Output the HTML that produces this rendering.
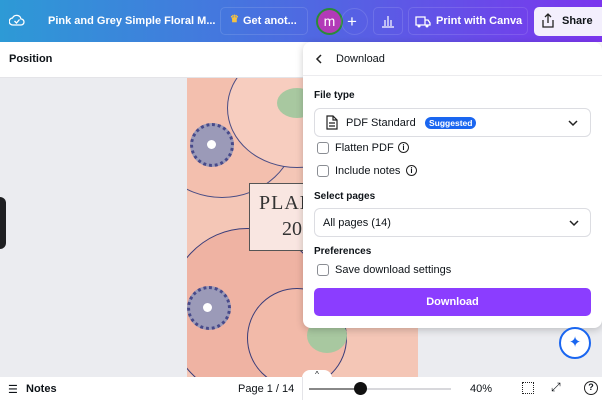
<!DOCTYPE html><html><head><style>
*{margin:0;padding:0;box-sizing:border-box}
body{width:602px;height:400px;overflow:hidden;position:relative;background:#ebecf0;font-family:"Liberation Sans",sans-serif;font-size:11px;color:#0e1318}
.hdr{position:absolute;left:0;top:0;width:602px;height:42px;background:linear-gradient(90deg,#2d9ad6 0%,#4a6fe0 45%,#7b35ee 100%);color:#fff;font-weight:bold}
.a{position:absolute}
.btn{position:absolute;top:7px;height:28px;border:1px solid rgba(255,255,255,.12);border-radius:5px}
.tb{position:absolute;left:0;top:42px;width:602px;height:36px;background:#fff;border-bottom:1px solid #e4e4e8}
.page{position:absolute;left:187px;top:78px;width:231px;height:302px;background:#f4c6b6;overflow:hidden}
.panel{position:absolute;left:303px;top:42px;width:299px;height:286px;background:#fff;border-radius:8px;box-shadow:0 2px 8px rgba(0,0,0,.2)}
.sel{position:absolute;left:11px;width:277px;height:29px;border:1px solid #dcdde2;border-radius:6px}
.cb{position:absolute;left:14px;width:12px;height:12px;border:1.5px solid #8a8d93;border-radius:3px}
.lbl{position:absolute;font-weight:bold;font-size:10px}
.bot{position:absolute;left:0;top:377px;width:602px;height:23px;background:#fff}
</style></head><body>
<div class="hdr">
<svg class="a" style="left:9px;top:13px" width="16" height="14" viewBox="0 0 16 14"><path d="M4 12h8a3 3 0 0 0 0-6 4.5 4.5 0 0 0-8.5-1A3.5 3.5 0 0 0 4 12z" fill="none" stroke="#fff" stroke-width="1.3"/><path d="M5.5 8l2 2 3-3.5" fill="none" stroke="#fff" stroke-width="1.3"/></svg>
<div class="a" style="left:48px;top:15px;font-size:11px">Pink and Grey Simple Floral M...</div>
<div class="btn" style="left:220px;width:88px"><span class="a" style="left:9px;top:6px;color:#f5c242;font-size:10px">♛</span><span class="a" style="left:22px;top:7px">Get anot...</span></div>
<div class="a" style="left:316px;top:8px;width:27px;height:27px;border-radius:50%;background:#b23ab8;border:2px solid #2a8a3a;text-align:center;line-height:22px;font-size:14px;font-weight:normal">m</div>
<div class="a" style="left:341px;top:8px;width:27px;height:27px;border-radius:50%;border:1px solid rgba(255,255,255,.12)"></div>
<div class="a" style="left:347px;top:12px;font-size:17px;font-weight:normal">+</div>
<div class="btn" style="left:373px;width:30px"><svg class="a" style="left:7px;top:6px" width="14" height="14"><path d="M1 13h12M4 12V6M7 12V2M10 12V6" stroke="#fff" stroke-width="1.2"/></svg></div>
<div class="btn" style="left:408px;width:120px"><svg class="a" style="left:6px;top:7px" width="16" height="13"><path d="M1 2h9v8H1zM10 5h3l2 3v2h-5" fill="none" stroke="#fff" stroke-width="1.3"/><circle cx="4" cy="11" r="1.5" fill="#fff"/><circle cx="12" cy="11" r="1.5" fill="#fff"/></svg><span class="a" style="left:27px;top:7px">Print with Canva</span></div>
<div class="a" style="left:534px;top:7px;width:68px;height:29px;background:#f3effd;border-radius:5px 0 0 5px;color:#0e1318"><svg class="a" style="left:7px;top:6px" width="14" height="15"><path d="M2 7v7h10V7M7 10V1M4 4l3-3 3 3" fill="none" stroke="#222" stroke-width="1.3"/></svg><span class="a" style="left:28px;top:8px">Share</span></div>
</div>
<div class="tb"><div class="a" style="left:9px;top:11px;font-weight:bold;font-size:11px">Position</div></div>
<div class="a" style="left:0;top:197px;width:6px;height:52px;background:#1e1f22;border-radius:0 6px 6px 0"></div>
<div class="page">
<div class="a" style="left:-40px;top:-20px;width:150px;height:140px;border-radius:50%;background:#f3bfae;border:1.5px solid #4a4d85"></div>
<div class="a" style="left:40px;top:-30px;width:140px;height:120px;border-radius:50%;background:#f7cdbf;border:1.5px solid #4a4d85"></div>
<div class="a" style="left:-20px;top:150px;width:160px;height:170px;border-radius:50%;background:#efb3a3;border:1.5px solid #3a3d7a"></div>
<div class="a" style="left:60px;top:210px;width:100px;height:100px;border-radius:50%;background:#f2baa9;border:1.5px solid #3a3d7a"></div>
<div class="a" style="left:90px;top:10px;width:40px;height:30px;border-radius:50%;background:#a8c8a0"></div>
<div class="a" style="left:120px;top:240px;width:40px;height:35px;border-radius:50%;background:#a8c8a0"></div>
<div class="a" style="left:3px;top:45px;width:44px;height:44px;border-radius:50%;background:#9b9ab8;border:3px dotted #474a8a"></div>
<div class="a" style="left:20px;top:62px;width:9px;height:9px;border-radius:50%;background:#fff"></div>
<div class="a" style="left:0;top:208px;width:44px;height:44px;border-radius:50%;background:#9b9ab8;border:3px dotted #474a8a"></div>
<div class="a" style="left:16px;top:225px;width:9px;height:9px;border-radius:50%;background:#fff"></div>
<div class="a" style="left:62px;top:105px;width:60px;height:68px;background:#f9e6e1;border:1px solid #555"></div>
<div class="a" style="left:72px;top:114px;font-family:'Liberation Serif',serif;font-size:20px;color:#333;letter-spacing:1px">PLAN</div>
<div class="a" style="left:95px;top:140px;font-family:'Liberation Serif',serif;font-size:20px;color:#333">20</div>
</div>
<div class="panel">
<svg class="a" style="left:12px;top:11px" width="8" height="12"><path d="M6 2L2 6l4 4" fill="none" stroke="#222" stroke-width="1.5"/></svg>
<div class="a" style="left:33px;top:11px;font-size:11px">Download</div>
<div class="a" style="left:0;top:33px;width:299px;height:1px;background:#ececef"></div>
<div class="lbl" style="left:11px;top:48px">File type</div>
<div class="sel" style="top:66px"><svg class="a" style="left:11px;top:6px" width="12" height="15"><path d="M1 1h6l4 4v9H1z M7 1v4h4 M3 8h6M3 11h6" fill="none" stroke="#222" stroke-width="1.2"/></svg><span class="a" style="left:31px;top:8px">PDF Standard</span><span class="a" style="left:110px;top:8px;background:#1a66f0;color:#fff;font-size:8.5px;font-weight:bold;padding:1px 4px;border-radius:6px">Suggested</span><svg class="a" style="left:253px;top:10px" width="10" height="8"><path d="M1 2l4 4 4-4" fill="none" stroke="#222" stroke-width="1.5"/></svg></div>
<div class="cb" style="top:100px"></div><div class="a" style="left:32px;top:100px">Flatten PDF</div><div class="a" style="left:95px;top:100px;width:11px;height:11px;border:1.3px solid #222;border-radius:50%;font-size:8px;text-align:center;line-height:9px;font-weight:bold">i</div>
<div class="cb" style="top:123px"></div><div class="a" style="left:32px;top:123px">Include notes</div><div class="a" style="left:103px;top:123px;width:11px;height:11px;border:1.3px solid #222;border-radius:50%;font-size:8px;text-align:center;line-height:9px;font-weight:bold">i</div>
<div class="lbl" style="left:11px;top:149px">Select pages</div>
<div class="sel" style="top:166px"><span class="a" style="left:8px;top:8px">All pages (14)</span><svg class="a" style="left:254px;top:10px" width="10" height="8"><path d="M1 2l4 4 4-4" fill="none" stroke="#222" stroke-width="1.5"/></svg></div>
<div class="lbl" style="left:11px;top:204px">Preferences</div>
<div class="cb" style="top:222px"></div><div class="a" style="left:32px;top:222px">Save download settings</div>
<div class="a" style="left:11px;top:246px;width:277px;height:28px;background:#8b3dff;border-radius:5px;color:#fff;font-weight:bold;text-align:center;line-height:28px">Download</div>
</div>
<div class="a" style="left:559px;top:327px;width:32px;height:32px;border-radius:50%;background:#fff;border:2px solid #1a66f0;color:#1a66f0;text-align:center;line-height:27px;font-size:15px">✦</div>
<div class="bot">
<div class="a" style="left:8px;top:6px;font-size:11px">☰</div>
<div class="a" style="left:26px;top:6px;font-weight:bold">Notes</div>
<div class="a" style="left:238px;top:6px">Page 1 / 14</div>
<div class="a" style="left:302px;top:-7px;width:30px;height:8px;background:#fff;border-radius:8px 8px 0 0;font-size:8px;text-align:center">^</div>
<div class="a" style="left:302px;top:0;width:1px;height:23px;background:#e4e4e8"></div>
<div class="a" style="left:309px;top:11px;width:142px;height:2px;background:#d8d8dc"></div>
<div class="a" style="left:309px;top:11px;width:52px;height:2px;background:#888"></div>
<div class="a" style="left:354px;top:5px;width:13px;height:13px;border-radius:50%;background:#111"></div>
<div class="a" style="left:470px;top:6px">40%</div>
<div class="a" style="left:522px;top:5px;width:12px;height:12px;border:1.5px dotted #222"></div>
<div class="a" style="left:551px;top:3px;font-size:12px">⤢</div>
<div class="a" style="left:584px;top:4px;width:14px;height:14px;border:1.5px solid #222;border-radius:50%;font-size:9px;text-align:center;line-height:11px;font-weight:bold">?</div>
</div>
</body></html>
